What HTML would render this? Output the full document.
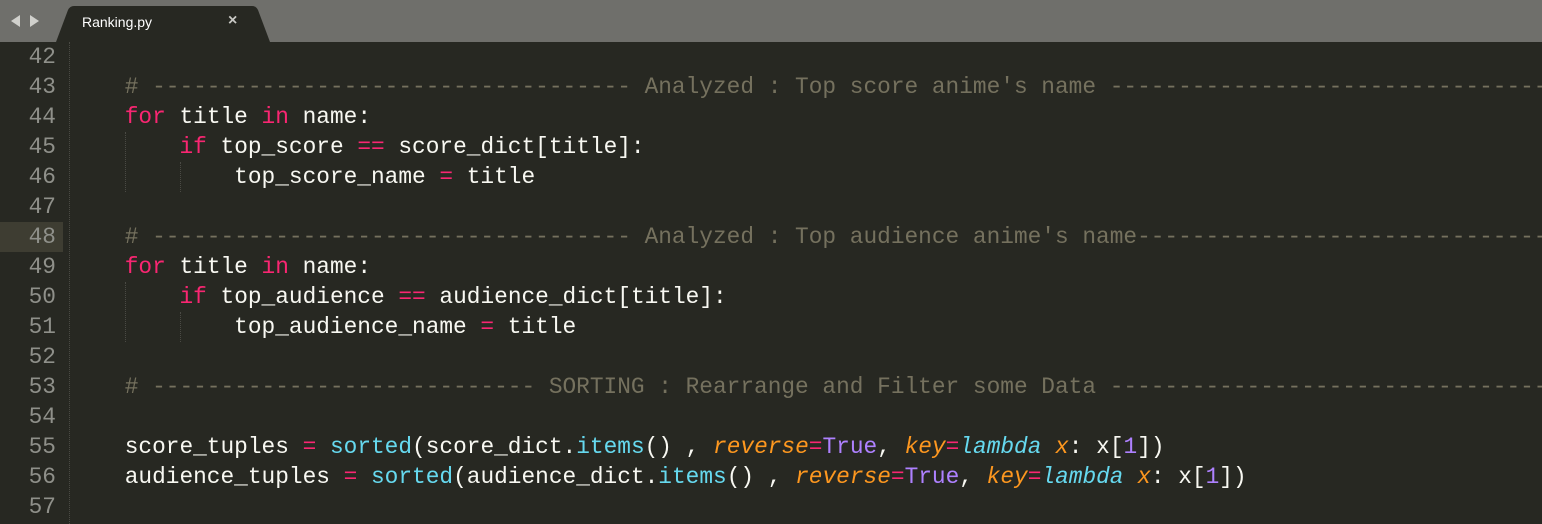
<!DOCTYPE html>
<html><head><style>
html,body{margin:0;padding:0;width:1542px;height:524px;overflow:hidden;background:#272822;}
#top{position:absolute;left:0;top:0;width:1542px;height:42px;background:#6f6f6b;}
#tab{position:absolute;left:56px;top:6px;width:214px;height:36px;}
.arr{position:absolute;top:15px;width:0;height:0;border-top:6px solid transparent;border-bottom:6px solid transparent;}
#code{position:absolute;left:0;top:42px;width:1542px;height:482px;overflow:hidden;font-family:"Liberation Mono",monospace;font-size:22.8px;}
.ln{position:absolute;left:0;width:56px;text-align:right;color:#8f908a;height:30px;line-height:30px;}
.l{position:absolute;left:70px;white-space:pre;color:#f8f8f2;height:30px;line-height:30px;}
.k{color:#f92672}.f{color:#66d9ef}.c{color:#75715e}.o{color:#fd971f;font-style:italic}.p{color:#ae81ff}.i{color:#66d9ef;font-style:italic}
.g{position:absolute;width:0;border-left:1px dotted #4a4a44;}
</style></head><body>
<div id="top">
<div class="arr" style="left:11px;border-right:9px solid #d0d0cc;"></div>
<div class="arr" style="left:30px;border-left:9px solid #d0d0cc;"></div>
<svg id="tab" width="214" height="36" viewBox="0 0 214 36"><path d="M0 36 L12 4 Q14 0 18 0 L196 0 Q200 0 202 4 L214 36 Z" fill="#272822"/></svg>
<div style="position:absolute;left:82px;top:14px;color:#fff;font:14px 'Liberation Sans',sans-serif;">Ranking.py</div>
<div style="position:absolute;left:228px;top:12px;color:#c8c8c4;font:bold 16px 'Liberation Sans',sans-serif;">×</div>
</div>
<div id="code">
<div style="position:absolute;left:0;top:180px;width:63px;height:30px;background:#3e3d32"></div>
<div class="g" style="left:69px;top:0;height:482px;"></div>
<div class="g" style="left:125px;top:90px;height:60px;"></div>
<div class="g" style="left:180px;top:120px;height:30px;"></div>
<div class="g" style="left:125px;top:240px;height:60px;"></div>
<div class="g" style="left:180px;top:270px;height:30px;"></div>

<div class="ln" style="top:0">42</div>
<div class="ln" style="top:30px">43</div>
<div class="ln" style="top:60px">44</div>
<div class="ln" style="top:90px">45</div>
<div class="ln" style="top:120px">46</div>
<div class="ln" style="top:150px">47</div>
<div class="ln" style="top:180px">48</div>
<div class="ln" style="top:210px">49</div>
<div class="ln" style="top:240px">50</div>
<div class="ln" style="top:270px">51</div>
<div class="ln" style="top:300px">52</div>
<div class="ln" style="top:330px">53</div>
<div class="ln" style="top:360px">54</div>
<div class="ln" style="top:390px">55</div>
<div class="ln" style="top:420px">56</div>
<div class="ln" style="top:450px">57</div>

<div class="l c" style="top:30px">    # ----------------------------------- Analyzed : Top score anime's name ----------------------------------------</div>
<div class="l" style="top:60px">    <span class="k">for</span> title <span class="k">in</span> name:</div>
<div class="l" style="top:90px">        <span class="k">if</span> top_score <span class="k">==</span> score_dict[title]:</div>
<div class="l" style="top:120px">            top_score_name <span class="k">=</span> title</div>
<div class="l c" style="top:180px">    # ----------------------------------- Analyzed : Top audience anime's name----------------------------------------</div>
<div class="l" style="top:210px">    <span class="k">for</span> title <span class="k">in</span> name:</div>
<div class="l" style="top:240px">        <span class="k">if</span> top_audience <span class="k">==</span> audience_dict[title]:</div>
<div class="l" style="top:270px">            top_audience_name <span class="k">=</span> title</div>
<div class="l c" style="top:330px">    # ---------------------------- SORTING : Rearrange and Filter some Data ----------------------------------------</div>
<div class="l" style="top:390px">    score_tuples <span class="k">=</span> <span class="f">sorted</span>(score_dict.<span class="f">items</span>() , <span class="o">reverse</span><span class="k">=</span><span class="p">True</span>, <span class="o">key</span><span class="k">=</span><span class="i">lambda</span> <span class="o">x</span>: x[<span class="p">1</span>])</div>
<div class="l" style="top:420px">    audience_tuples <span class="k">=</span> <span class="f">sorted</span>(audience_dict.<span class="f">items</span>() , <span class="o">reverse</span><span class="k">=</span><span class="p">True</span>, <span class="o">key</span><span class="k">=</span><span class="i">lambda</span> <span class="o">x</span>: x[<span class="p">1</span>])</div>
</div>
</body></html>
